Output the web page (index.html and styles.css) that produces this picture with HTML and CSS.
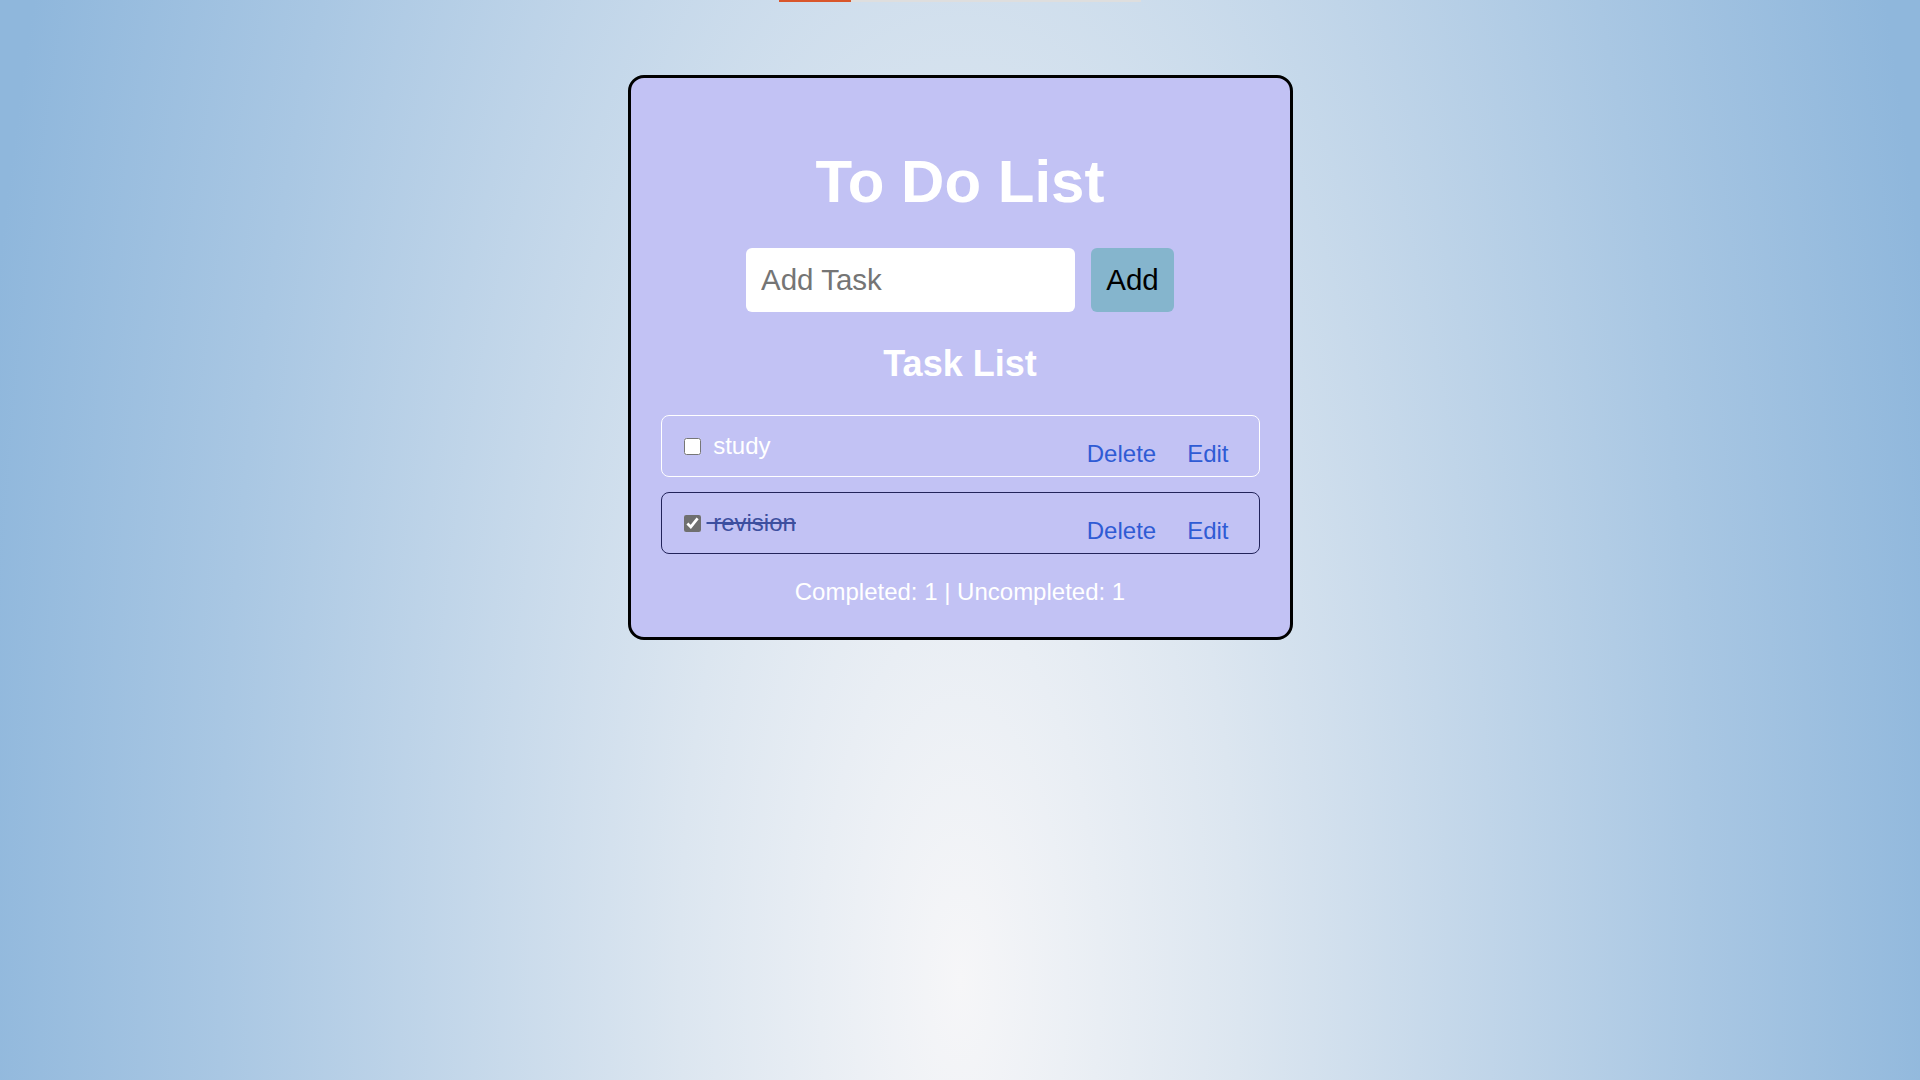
FILE: index.html
```html
<!DOCTYPE html>
<html lang="en">
<head>
<meta charset="utf-8">
<title>To Do List</title>
<link rel="stylesheet" href="styles.css">
</head>
<body>
<div class="topbar"><div class="topbar-fill"></div></div>
<main class="card">
  <h1 class="title">To Do List</h1>
  <div class="add-row">
    <input class="task-input" type="text" placeholder="Add Task">
    <button class="add-btn" type="button">Add</button>
  </div>
  <h2 class="subtitle">Task List</h2>
  <ul class="tasks">
    <li class="task">
      <label class="task-label">
        <input class="task-check" type="checkbox">
        <span class="task-text">&nbsp;study</span>
      </label>
      <div class="actions">
        <button class="link-btn" type="button">Delete</button>
        <button class="link-btn" type="button">Edit</button>
      </div>
    </li>
    <li class="task task-done">
      <label class="task-label">
        <input class="task-check" type="checkbox" checked>
        <span class="task-text">&nbsp;revision</span>
      </label>
      <div class="actions">
        <button class="link-btn" type="button">Delete</button>
        <button class="link-btn" type="button">Edit</button>
      </div>
    </li>
  </ul>
  <p class="stats">Completed: 1 | Uncompleted: 1</p>
</main>
</body>
</html>
```

FILE: styles.css
```css
html, body {
  margin: 0;
  padding: 0;
}

body {
  min-height: 100vh;
  font-family: "Liberation Sans", Arial, sans-serif;
  background: radial-gradient(ellipse 1000px 2600px at 50% 980px, #f6f6f8 0%, #dce6f0 28%, #a9c7e3 74%, #8fb7dc 100%);
  background-color: #8fb7dc;
  overflow: hidden;
}

.topbar {
  position: absolute;
  top: 0;
  left: 779px;
  width: 362px;
  height: 2px;
  background: #dedede;
}

.topbar-fill {
  width: 72px;
  height: 100%;
  background: #d9562b;
}

.card {
  box-sizing: border-box;
  width: 665px;
  margin: 75px auto 0;
  padding: 30px 30px 31px;
  background: #c2c2f4;
  border: 3px solid #000;
  border-radius: 16px;
  display: flex;
  flex-direction: column;
  align-items: center;
}

.title {
  margin: 44px 0 0;
  font-size: 60px;
  line-height: 60px;
  font-weight: bold;
  color: #ffffff;
}

.add-row {
  margin-top: 36px;
  display: flex;
  gap: 16px;
}

.task-input {
  box-sizing: border-box;
  width: 329px;
  height: 64px;
  padding: 0 15px;
  border: none;
  border-radius: 6px;
  background: #ffffff;
  font-family: inherit;
  font-size: 29.5px;
  color: #222;
  outline: none;
}

.task-input::placeholder {
  color: #757575;
}

.add-btn {
  box-sizing: border-box;
  width: 83px;
  height: 64px;
  padding: 0;
  border: none;
  border-radius: 6px;
  background: #85b5cd;
  font-family: inherit;
  font-size: 29.5px;
  color: #000;
}

.subtitle {
  margin: 32px 0 0;
  font-size: 36px;
  line-height: 40px;
  font-weight: bold;
  color: #ffffff;
}

.tasks {
  list-style: none;
  margin: 31px 0 0;
  padding: 0;
  width: 100%;
  display: flex;
  flex-direction: column;
  gap: 15px;
}

.task {
  box-sizing: border-box;
  height: 62px;
  padding: 0 30px 0 22px;
  border: 1px solid #ffffff;
  border-radius: 8px;
  display: flex;
  align-items: center;
  justify-content: space-between;
}

.task-done {
  border-color: #22235a;
}

.task-label {
  display: flex;
  align-items: center;
  font-size: 24px;
  line-height: 28px;
  color: #ffffff;
}

.task-check {
  width: 17px;
  height: 17px;
  margin: 0 6px 0 0;
  accent-color: #6f6f6f;
}

.task-done .task-text {
  color: #3c4f9f;
  text-decoration: line-through;
}

.actions {
  display: flex;
  gap: 31px;
  padding-top: 15px;
}

.link-btn {
  padding: 0;
  border: none;
  background: transparent;
  font-family: inherit;
  font-size: 24px;
  line-height: 28px;
  color: #2f5bd4;
  cursor: pointer;
}

.stats {
  margin: 24px 0 0;
  font-size: 24px;
  line-height: 28px;
  color: #ffffff;
}
```
